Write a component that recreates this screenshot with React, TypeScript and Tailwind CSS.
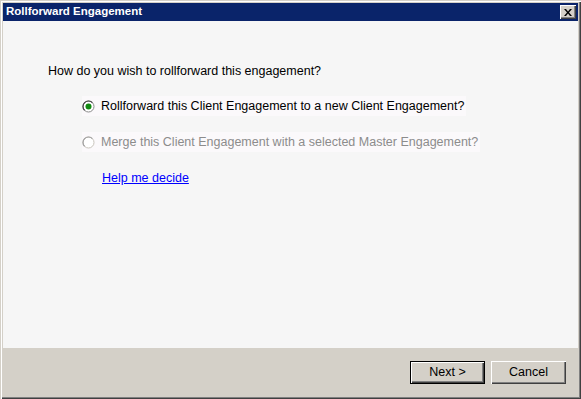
import { useState } from 'react'

function Radio({ checked, disabled }: { checked?: boolean; disabled?: boolean }) {
  return (
    <svg width="13" height="13" viewBox="0 0 13 13" className="shrink-0">
      <circle cx="6.5" cy="6.5" r="5.5" fill="#ffffff" stroke={disabled ? '#c8c4bc' : '#8a8a8a'} strokeWidth="1" />
      <path d="M2.6 10.4 A5.5 5.5 0 0 1 10.4 2.6" fill="none" stroke={disabled ? '#a0a0a0' : '#404040'} strokeWidth="1.2" />
      {checked && <circle cx="6.5" cy="6.5" r="3" fill="#118a11" />}
    </svg>
  )
}

function Button({ label, isDefault }: { label: string; isDefault?: boolean }) {
  return (
    <button
      className={[
        'w-[75px] h-[23px] bg-[#d4d0c8] text-[12.5px] text-black',
        isDefault
          ? 'border border-black shadow-[inset_1px_1px_0_#ffffff,inset_-1px_-1px_0_#404040,inset_-2px_-2px_0_#808080]'
          : 'shadow-[inset_1px_1px_0_#ffffff,inset_-1px_-1px_0_#404040,inset_-2px_-2px_0_#808080]',
      ].join(' ')}
    >
      {label}
    </button>
  )
}

export default function App() {
  const [choice] = useState<'new' | 'merge'>('new')

  return (
    <div
      className="w-[581px] h-[399px] bg-[#d4d0c8] flex flex-col p-[3px] shadow-[inset_1px_1px_0_#d4d0c8,inset_2px_2px_0_#ffffff,inset_-1px_-1px_0_#404040,inset_-2px_-2px_0_#808080]"
      style={{ fontFamily: '"Liberation Sans", Arial, sans-serif' }}
    >
      {/* Title bar */}
      <div className="h-[18px] bg-[#0a246a] flex items-center justify-between pl-[3px] pr-[2px]">
        <span className="text-white font-bold text-[11.5px] leading-none">Rollforward Engagement</span>
        <div className="w-[16px] h-[14px] bg-[#d4d0c8] flex items-center justify-center shadow-[inset_1px_1px_0_#ffffff,inset_-1px_-1px_0_#404040,inset_-2px_-2px_0_#808080]">
          <svg width="8" height="7" viewBox="0 0 8 7">
            <path d="M0 0 L2 0 L4 2.5 L6 0 L8 0 L5 3.5 L8 7 L6 7 L4 4.5 L2 7 L0 7 L3 3.5 Z" fill="#000" />
          </svg>
        </div>
      </div>

      {/* Content */}
      <div className="flex-1 bg-[#f6f6f6] pl-[45px] pt-[42px] text-[12.5px]">
        <div className="text-black leading-[16px]">How do you wish to rollforward this engagement?</div>

        <div className="mt-[17px] ml-[34px] flex flex-col items-start gap-[16px]">
          <div className="flex items-center gap-[6px] w-fit pr-[2px] h-[20px] bg-[#fbf9fb] whitespace-nowrap">
            <Radio checked={choice === 'new'} />
            <span className="text-black">Rollforward this Client Engagement to a new Client Engagement?</span>
          </div>
          <div className="flex items-center gap-[6px] w-fit pr-[2px] h-[20px] bg-[#fbf9fb] whitespace-nowrap">
            <Radio disabled checked={choice === 'merge'} />
            <span className="text-[#8c8c8c]">Merge this Client Engagement with a selected Master Engagement?</span>
          </div>
        </div>

        <a href="#" className="inline-block mt-[18px] ml-[54px] text-[#0000ff] underline leading-[16px]">
          Help me decide
        </a>
      </div>

      {/* Footer */}
      <div className="h-[48px] flex items-center justify-end gap-[6px] pr-[12px] pt-[1px]">
        <Button label="Next >" isDefault />
        <Button label="Cancel" />
      </div>
    </div>
  )
}
